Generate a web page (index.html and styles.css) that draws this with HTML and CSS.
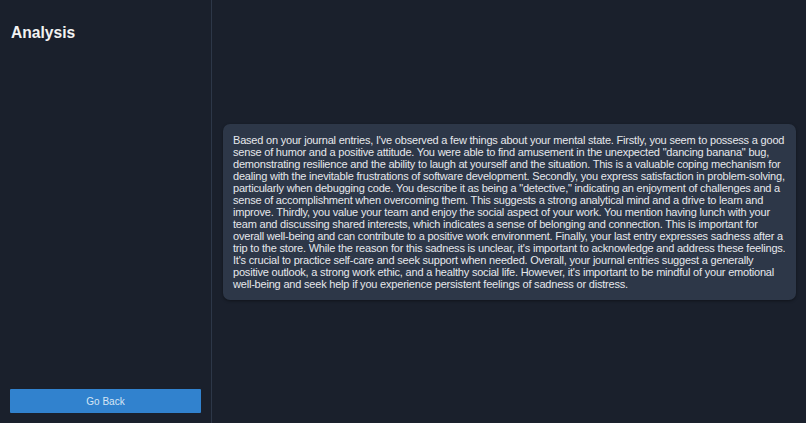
FILE: index.html
```html
<!DOCTYPE html>
<html>
<head>
<meta charset="utf-8">
<link rel="stylesheet" href="styles.css">
</head>
<body>
<div class="app">
  <aside class="sidebar">
    <h2 class="title">Analysis</h2>
    <button class="back">Go Back</button>
  </aside>
  <main class="main">
    <div class="card">
      <p class="analysis">Based on your journal entries, I've observed a few things about your mental state. Firstly, you seem to possess a good sense of humor and a positive attitude. You were able to find amusement in the unexpected "dancing banana" bug, demonstrating resilience and the ability to laugh at yourself and the situation. This is a valuable coping mechanism for dealing with the inevitable frustrations of software development. Secondly, you express satisfaction in problem-solving, particularly when debugging code. You describe it as being a "detective," indicating an enjoyment of challenges and a sense of accomplishment when overcoming them. This suggests a strong analytical mind and a drive to learn and improve. Thirdly, you value your team and enjoy the social aspect of your work. You mention having lunch with your team and discussing shared interests, which indicates a sense of belonging and connection. This is important for overall well-being and can contribute to a positive work environment. Finally, your last entry expresses sadness after a trip to the store. While the reason for this sadness is unclear, it's important to acknowledge and address these feelings. It's crucial to practice self-care and seek support when needed. Overall, your journal entries suggest a generally positive outlook, a strong work ethic, and a healthy social life. However, it's important to be mindful of your emotional well-being and seek help if you experience persistent feelings of sadness or distress.</p>
    </div>
  </main>
</div>
</body>
</html>
```

FILE: styles.css
```css
html, body {
  margin: 0;
  padding: 0;
  height: 100%;
  background: #1a202c;
  font-family: "Liberation Sans", Arial, sans-serif;
  color: rgba(255, 255, 255, 0.92);
}

.app {
  display: flex;
  height: 100vh;
}

.sidebar {
  width: 191px;
  padding: 10px;
  border-right: 1px solid #2d3748;
  display: flex;
  flex-direction: column;
  justify-content: space-between;
  flex-shrink: 0;
}

.title {
  margin: 13px 0 0 1px;
  font-size: 15.6px;
  font-weight: 700;
  line-height: 20px;
  color: #f2f2f2;
}

.back {
  height: 24px;
  width: 100%;
  border: none;
  border-radius: 1px;
  background: #3182ce;
  color: #d6e6f5;
  font-family: "Liberation Sans", Arial, sans-serif;
  font-size: 10px;
  padding: 0;
}

.main {
  flex: 1;
  padding: 10px 10px 10px 11px;
  display: flex;
  align-items: center;
}

.card {
  flex: 1;
  background: #2d3748;
  border-radius: 7px;
  padding: 10px;
  box-shadow: 0 1px 3px rgba(0, 0, 0, 0.4);
}

.analysis {
  margin: 0;
  font-size: 11px;
  letter-spacing: -0.2px;
  line-height: 12px;
  color: #e6e8ec;
}
```
